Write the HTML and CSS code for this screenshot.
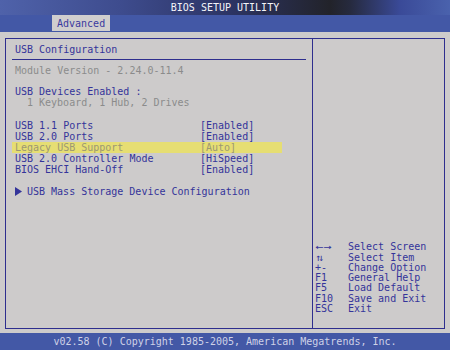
FILE: index.html
```html
<!DOCTYPE html>
<html lang="en">
<head>
    <title>BIOS Setup Utility</title>
    <link rel="stylesheet" href="styles.css">
</head>
<body>
    <header class="titlebar">BIOS SETUP UTILITY</header>

    <nav class="tabbar">
        <span class="tab">Advanced</span>
    </nav>

    <div class="main">
        <div class="frame">
            <div class="left">
                <h1 class="heading">USB Configuration</h1>
                <div class="divider"></div>

                <p class="dim">Module Version - 2.24.0-11.4</p>

                <p class="devices">USB Devices Enabled :</p>
                <p class="dim indent">1 Keyboard, 1 Hub, 2 Drives</p>

                <div class="options">
                    <div class="row"><span class="label">USB 1.1 Ports</span><span>[Enabled]</span></div>
                    <div class="row"><span class="label">USB 2.0 Ports</span><span>[Enabled]</span></div>
                    <div class="row selected"><span class="label">Legacy USB Support</span><span>[Auto]</span></div>
                    <div class="row"><span class="label">USB 2.0 Controller Mode</span><span>[HiSpeed]</span></div>
                    <div class="row"><span class="label">BIOS EHCI Hand-Off</span><span>[Enabled]</span></div>
                </div>

                <div class="submenu">
                    <svg class="arrow" width="7" height="9" viewBox="0 0 7 9"><path d="M0 0 L7 4.5 L0 9 Z" fill="#34349a"/></svg>USB Mass Storage Device Configuration
                </div>
            </div>

            <div class="right">
                <div class="help">
                    <div class="key"><span class="wide">&larr;&rarr;</span></div><div>Select Screen</div>
                    <div class="key tight">&uarr;&darr;</div><div>Select Item</div>
                    <div class="key">+-</div><div>Change Option</div>
                    <div class="key">F1</div><div>General Help</div>
                    <div class="key">F5</div><div>Load Default</div>
                    <div class="key">F10</div><div>Save and Exit</div>
                    <div class="key">ESC</div><div>Exit</div>
                </div>
            </div>
        </div>
    </div>

    <footer class="footer">v02.58 (C) Copyright 1985-2005, American Megatrends, Inc.</footer>
</body>
</html>
```

FILE: styles.css
```css
body {
    margin: 0;
    width: 450px;
    height: 350px;
    overflow: hidden;
    background-color: #cdcbcb;
    color: #34349a;
    font-family: "DejaVu Sans Mono", "Liberation Mono", monospace;
    font-size: 10px;
}

p, h1 {
    margin: 0;
    font-size: 10px;
    font-weight: normal;
}

.titlebar {
    height: 15px;
    line-height: 15px;
    text-align: center;
    color: #f4f4f8;
    background: linear-gradient(to right, #4f62aa 0px, #3e4c8e 120px, #2c3464 230px, #22232a 330px, #262a3e 350px, #3a4a98 400px, #4a62ad 450px);
}

.tabbar {
    height: 17px;
    padding-left: 52px;
    background-color: #4358a6;
}

.tab {
    display: inline-block;
    height: 16px;
    line-height: 17px;
    padding: 0 5px;
    background-color: #d0cece;
    color: #3a3a9e;
}

.main {
    height: 301px;
    padding: 6px 5px 4px 5px;
    box-sizing: border-box;
}

.frame {
    display: grid;
    grid-template-columns: 307px 1fr;
    height: 291px;
    box-sizing: border-box;
    border: 1px solid #2e2e8e;
}

.left {
    border-right: 1px solid #2e2e8e;
    padding-top: 5px;
    line-height: 11px;
}

.heading {
    padding-left: 9px;
    line-height: 11px;
}

.divider {
    height: 1px;
    margin: 4px 6px 5px 6px;
    background-color: #2e2e8e;
}

.dim {
    color: #8b8b8b;
    padding-left: 9px;
}

.indent {
    padding-left: 21px;
}

.devices {
    margin-top: 10px;
    padding-left: 9px;
}

.options {
    margin-top: 12px;
    line-height: 11.1px;
}

.row {
    display: flex;
    width: 270px;
    margin-left: 6px;
    padding-left: 3px;
    box-sizing: border-box;
}

.row .label {
    width: 185px;
}

.selected {
    background-color: #e6de72;
    color: #9c9872;
}

.submenu {
    margin-top: 11px;
    padding-left: 9px;
    display: flex;
    align-items: center;
}

.arrow {
    margin-right: 5px;
}

.right {
    display: flex;
    flex-direction: column;
    justify-content: flex-end;
    padding: 0 0 14px 2px;
}

.help {
    display: grid;
    grid-template-columns: 33px 1fr;
    line-height: 10.25px;
}

.wide {
    display: inline-block;
    transform: scaleX(1.35);
    transform-origin: left center;
}

.tight {
    letter-spacing: -3px;
}

.footer {
    height: 17px;
    line-height: 17px;
    text-align: center;
    background-color: #4358a6;
    color: #cfd2e6;
}
```
